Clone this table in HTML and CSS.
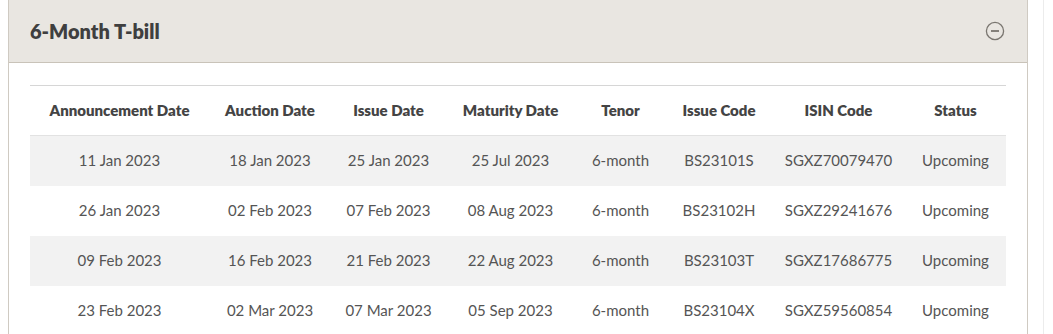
FILE: index.html
```html
<!DOCTYPE html>
<html lang="en">
<head>
<meta charset="utf-8">
<title>6-Month T-bill</title>
<link rel="stylesheet" href="styles.css">
</head>
<body>
<div class="page">
  <section class="panel">
    <header class="panel-head">
      <h2 class="panel-title">6-Month T-bill</h2>
      <button class="toggle" aria-label="Collapse">
        <svg width="20" height="20" viewBox="0 0 20 20" aria-hidden="true">
          <circle cx="10" cy="10" r="8.6" fill="none" stroke="#7a7670" stroke-width="1.3"/>
          <line x1="6" y1="10" x2="14" y2="10" stroke="#6a6660" stroke-width="1.6"/>
        </svg>
      </button>
    </header>
    <div class="panel-body">
      <table class="bills">
        <colgroup>
          <col class="c1"><col class="c2"><col class="c3"><col class="c4">
          <col class="c5"><col class="c6"><col class="c7"><col class="c8">
        </colgroup>
        <thead>
          <tr>
            <th>Announcement Date</th><th>Auction Date</th><th>Issue Date</th><th>Maturity Date</th>
            <th>Tenor</th><th>Issue Code</th><th>ISIN Code</th><th>Status</th>
          </tr>
        </thead>
        <tbody>
          <tr class="alt"><td>11 Jan 2023</td><td>18 Jan 2023</td><td>25 Jan 2023</td><td>25 Jul 2023</td><td>6-month</td><td>BS23101S</td><td>SGXZ70079470</td><td>Upcoming</td></tr>
          <tr><td>26 Jan 2023</td><td>02 Feb 2023</td><td>07 Feb 2023</td><td>08 Aug 2023</td><td>6-month</td><td>BS23102H</td><td>SGXZ29241676</td><td>Upcoming</td></tr>
          <tr class="alt"><td>09 Feb 2023</td><td>16 Feb 2023</td><td>21 Feb 2023</td><td>22 Aug 2023</td><td>6-month</td><td>BS23103T</td><td>SGXZ17686775</td><td>Upcoming</td></tr>
          <tr class="last"><td>23 Feb 2023</td><td>02 Mar 2023</td><td>07 Mar 2023</td><td>05 Sep 2023</td><td>6-month</td><td>BS23104X</td><td>SGXZ59560854</td><td>Upcoming</td></tr>
        </tbody>
      </table>
    </div>
  </section>
  <div class="edge"></div>
</div>
</body>
</html>
```
FILE: styles.css
```css
html, body {
  margin: 0;
  padding: 0;
  background: #ffffff;
}
body {
  font-family: "Lato", "Liberation Sans", sans-serif;
  color: #555;
  overflow: hidden;
}
.page {
  display: flex;
  align-items: flex-start;
  padding-left: 8px;
  height: 334px;
}
.panel {
  width: 1020px;
  border-left: 1px solid #cfcac2;
  border-right: 1px solid #cfcac2;
  height: 100%;
  box-sizing: border-box;
}
.panel-head {
  display: flex;
  align-items: center;
  justify-content: space-between;
  height: 63px;
  box-sizing: border-box;
  background: #e9e6e1;
  border-bottom: 1px solid #c9c3b9;
  padding: 0 22px 0 21px;
}
.panel-title {
  margin: 0;
  font-size: 20px;
  font-weight: 800;
  color: #3f3f3f;
}
.toggle {
  border: 0;
  background: none;
  padding: 0;
  width: 20px;
  height: 20px;
  display: flex;
}
.panel-body {
  padding: 22px 20px 0 21px;
}
.bills {
  width: 976px;
  border-collapse: collapse;
  table-layout: fixed;
  border-top: 1px solid #d6d6d6;
}
.c1 { width: 179px; }
.c2 { width: 122px; }
.c3 { width: 115px; }
.c4 { width: 129px; }
.c5 { width: 91px; }
.c6 { width: 106px; }
.c7 { width: 133px; }
.c8 { width: 101px; }
.bills th {
  height: 47px;
  font-size: 15px;
  font-weight: 800;
  color: #444;
  text-align: center;
  padding: 0 0 2px;
  border-bottom: 1px solid #e2e2e2;
}
.bills td {
  height: 48px;
  font-size: 15px;
  color: #555;
  text-align: center;
  padding: 0 0 2px;
}
.bills tr.alt td {
  background: #f2f2f2;
}
.bills tr.last td {
  border-bottom: 1px solid #e2e2e2;
}
.edge {
  width: 1px;
  height: 334px;
  margin-left: 15px;
  background: #ececec;
}
```
